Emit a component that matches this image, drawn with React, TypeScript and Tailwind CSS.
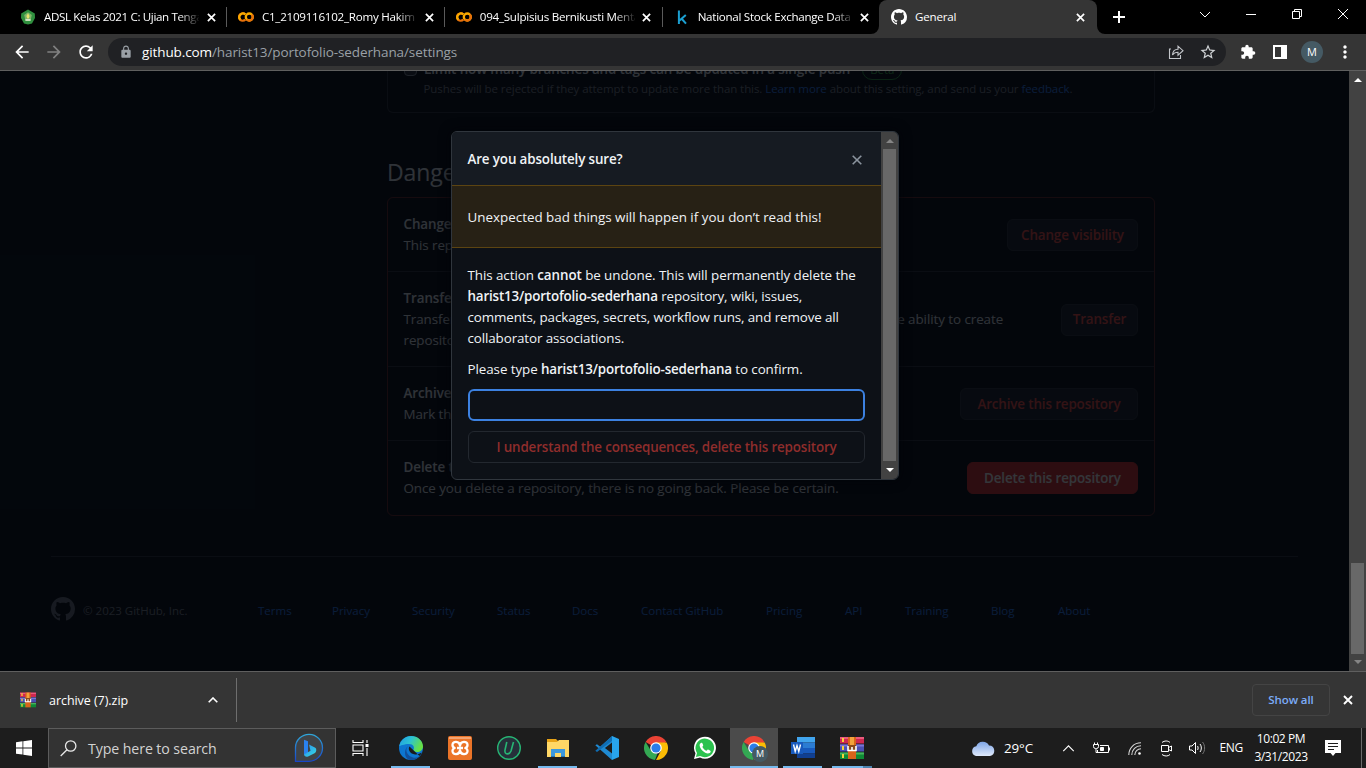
import React from "react";
import {
  MdArrowBack,
  MdArrowForward,
  MdRefresh,
  MdLock,
  MdStarBorder,
  MdExtension,
  MdMoreVert,
} from "react-icons/md";

const Octocat = ({ className }: { className: string }) => (
  <svg viewBox="0 0 16 16" className={className} fill="currentColor">
    <path d="M8 0C3.58 0 0 3.58 0 8c0 3.54 2.29 6.53 5.47 7.59.4.07.55-.17.55-.38 0-.19-.01-.82-.01-1.49-2.01.37-2.53-.49-2.69-.94-.09-.23-.48-.94-.82-1.13-.28-.15-.68-.52-.01-.53.63-.01 1.08.58 1.23.82.72 1.21 1.87.87 2.33.66.07-.52.28-.87.51-1.07-1.78-.2-3.64-.89-3.64-3.95 0-.87.31-1.59.82-2.15-.08-.2-.36-1.02.08-2.12 0 0 .67-.21 2.2.82.64-.18 1.32-.27 2-.27.68 0 1.36.09 2 .27 1.53-1.04 2.2-.82 2.2-.82.44 1.1.16 1.92.08 2.12.51.56.82 1.27.82 2.15 0 3.07-1.87 3.75-3.65 3.95.29.25.54.73.54 1.48 0 1.07-.01 1.93-.01 2.2 0 .21.15.46.55.38A8.013 8.013 0 0016 8c0-4.42-3.58-8-8-8z" />
  </svg>
);

const Cross = ({ className }: { className: string }) => (
  <svg viewBox="0 0 10 10" className={`shrink-0 ${className}`} stroke="white" strokeWidth="1.900">
    <path d="m1 1 8 8M9 1 1 9" />
  </svg>
);

const Crest = () => (
  <svg viewBox="0 0 16 16" className="size-4">
    <path d="M8 .5 14.8 4.5 15 9l-3 5.500L8 15.600 4 14.500 1 9l.2-4.500Z" fill="#2f8f3e" />
    <path d="M8 3.200 11.800 6 10.500 12h-5L4.200 6Z" fill="#7fb56a" />
    <path d="M8 4.200 9.600 7 8.700 9.500H7.300L6.400 7Z" fill="#e6e36a" />
    <path d="M5.500 10.200h5v1.500h-5Z" fill="#e9efe0" />
  </svg>
);

const Colab = () => (
  <svg viewBox="0 0 16 16" className="size-4" fill="none" strokeWidth="2.300">
    <path d="M7.300 5.300a3.700 3.700 0 1 0 0 5.400" stroke="#e8710a" />
    <path d="M2.300 10.700a3.700 3.700 0 0 1 5-5.400" stroke="#f9ab00" />
    <circle cx="11.300" cy="8" r="3.500" stroke="#f9ab00" />
    <path d="M13.800 5.600a3.500 3.500 0 0 1-5 4.900" stroke="#e8710a" />
  </svg>
);

const Kaggle = () => (
  <svg viewBox="0 0 16 16" className="size-4" fill="none" stroke="#1b9fd0" strokeWidth="2">
    <path d="M4.900 1.500V15M11.800 6 5.500 11.500M7.500 9.500l4.500 5.200" />
  </svg>
);

const Rar = ({ className }: { className: string }) => (
  <svg viewBox="0 0 24 24" className={className}>
    <path fill="#cf2850" d="M0 1h24v6.500H0z" />
    <path fill="#e95a7c" d="M0 1h24v2H0z" />
    <path fill="#4a4fb3" d="M0 8.500h24v7H0z" />
    <path fill="#7b74d6" d="M0 8.500h24v2H0z" />
    <path fill="#0f8a35" d="M0 16.500h24V23H0z" />
    <path fill="#46b45b" d="M0 16.500h24v2H0z" />
    <path fill="#f5d13a" d="M2 2h2v4H2zM2 10h2v4H2zM2 18h2v4H2z" />
    <path fill="#d9641b" d="M8 1h8v22H8z" />
    <path fill="#f2a33c" d="M10 1h4v8h-4z" />
    <path fill="#8a4a1c" d="M8 9h8v6H8z" />
    <path fill="none" stroke="#fff" strokeWidth="1.600" d="M8 10v4.500h8V10M12 11v3.500" />
  </svg>
);

const Bing = () => (
  <svg viewBox="0 0 30 30" className="size-[30px]" fill="none">
    <defs>
      <linearGradient id="bing-ring" x1="0" y1="1" x2="0" y2="0">
        <stop offset="0" stopColor="#1746c9" />
        <stop offset="1" stopColor="#2fa6d8" />
      </linearGradient>
      <linearGradient id="bing-b" x1="0" y1="0" x2="1" y2="1">
        <stop offset="0" stopColor="#2b8df0" />
        <stop offset="1" stopColor="#35dbe0" />
      </linearGradient>
    </defs>
    <path d="M1.500 28.300V14.500A13.500 13.500 0 1 1 15 28.300Z" fill="#3f4347" stroke="url(#bing-ring)" strokeWidth="1.300" />
    <path d="M10 6.800 14 8.200V20l-4 2Z" fill="#2a82ef" />
    <path d="m15 11.500 6.300 3.200c1.500 1 1.300 4-.3 5.200L14 23.500c-2 .8-4-.5-4-2l6.500-3.700Z" fill="url(#bing-b)" />
  </svg>
);

const Edge = () => (
  <svg viewBox="0 0 24 24" className="size-6">
    <defs>
      <linearGradient id="edge-top" x1="0" y1="0" x2="1" y2=".4">
        <stop offset="0" stopColor="#209be5" />
        <stop offset=".5" stopColor="#2cc3d2" />
        <stop offset="1" stopColor="#66e046" />
      </linearGradient>
    </defs>
    <circle cx="12" cy="12" r="12" fill="#0d76d0" />
    <path d="M.3 10C1.300 4.500 6 0 12 0c7 0 12 5 12 10.500 0 3.500-2.800 5.500-6 5.500-2.700 0-4-1.200-3.500-2.300 1.200-2.200.2-5.700-4.500-5.700C5 8 1 10 .3 10Z" fill="url(#edge-top)" />
    <path d="M9.500 10C6 12 6.500 19.500 14 21.500c3 .8 6-.5 7.500-2.500A12 12 0 0 1 10 23.800C4.500 21.500 5 12 9.500 10Z" fill="#124f9b" />
    <path d="M10.500 10.500C8.500 13 11 18 16 18.500c3 .3 5-1 6.500-2 .3 1-1.500 3-2 3.400" fill="#1a1a1a" />
  </svg>
);

const Xampp = () => (
  <svg viewBox="0 0 24 24" className="size-6">
    <rect width="24" height="24" rx="2" fill="#eb7428" />
    <rect x="1" y="1" width="22" height="2" fill="#f2a473" />
    <path
      d="M12 9.500C11.500 5 4.700 4.800 4.500 8.700c-.1 1.800 1 2.900 2.200 3.300-1.200.4-2.300 1.500-2.200 3.300.2 3.900 7 3.700 7.500-.8.5 4.500 7.300 4.700 7.500.8.1-1.800-1-2.900-2.200-3.300 1.200-.4 2.300-1.500 2.200-3.300C19.300 4.800 12.500 5 12 9.500ZM9 12h6"
      fill="none"
      stroke="#fff"
      strokeWidth="2.300"
      strokeLinejoin="round"
    />
  </svg>
);

const Uninstaller = () => (
  <svg viewBox="0 0 24 24" className="size-6" fill="none">
    <circle cx="12" cy="12" r="11.300" fill="#26303a" stroke="#27b574" strokeWidth="1.400" />
    <path d="M9.800 6 8 14c-.8 5 4.500 5 6 1L16.500 6" stroke="#27b574" strokeWidth="1.600" />
  </svg>
);

const Explorer = () => (
  <svg viewBox="0 0 24 24" className="size-6">
    <path fill="#e8a317" d="M1 3h9l2 2v3H1z" />
    <path fill="#ffd766" d="M1 6h10l2-2h10v17H1z" />
    <path fill="#3c98dd" d="M5 13h14v8h-4v-4H9v4H5z" />
    <path fill="#2171b5" d="M5 20h4v1H5zM15 20h4v1h-4z" />
  </svg>
);

const Code = () => (
  <svg viewBox="0 0 24 24" className="size-6">
    <path d="M17 0 5.300 10.800 2 8.200.3 9.300 17 24l1-6.500V6.500Z" fill="#1f8ad2" />
    <path d="M.3 14.800 2 16 17.500 4.500V0L.3 14.800Z" fill="#0f6db3" />
    <path d="M17 0 24 3v18l-7 3V6.500L9.800 12l7.200 5.500Z" fill="#28a5ee" />
    <path d="M17 6.500v11L9.800 12Z" fill="#1c1c1c" />
  </svg>
);

const Chrome = () => (
  <svg viewBox="0 0 24 24" className="size-6">
    <path d="M12 12 1.600 6A12 12 0 0 1 22.400 6Z" fill="#ea4335" />
    <path d="M12 6.500h10.700A12 12 0 0 1 12 24l4.800-9Z" fill="#fbbc05" />
    <path d="M1.600 6 6.800 14.500 12 18l1.500-.5L11 24A12 12 0 0 1 1.600 6Z" fill="#34a853" />
    <circle cx="12" cy="12" r="5.800" fill="#fff" />
    <circle cx="12" cy="12" r="4.600" fill="#2b7de9" />
  </svg>
);

const WhatsApp = () => (
  <svg viewBox="0 0 24 24" className="size-6">
    <path d="M1 23 2.500 17.300A11 11 0 1 1 7 21.500Z" fill="#fff" />
    <path d="M2.900 21.100 4 17A9.300 9.300 0 1 1 7.200 20Z" fill="#2bc24e" />
    <path d="M8.500 6.800c-.7 0-1.900 1-1.900 2.500 0 3.500 5 8.200 8.300 8.200 1.500 0 2.800-1 2.800-2.300 0-.6-2.400-1.900-2.900-1.700-.5.300-.9 1.300-1.400 1.200-1.500-.4-3.500-2.300-4-3.700-.1-.5.800-1 .8-1.500 0-.5-.8-2.500-1.200-2.700Z" fill="#fff" />
  </svg>
);

const Word = () => (
  <svg viewBox="0 0 24 24" className="size-6">
    <path fill="#41a5ee" d="M6 1h18v5.500H6z" />
    <path fill="#2b7cd3" d="M6 6.500h18V12H6z" />
    <path fill="#185abd" d="M6 12h18v5.500H6z" />
    <path fill="#103f91" d="M6 17.500h18V22H6z" />
    <path fill="#185abd" d="M0 6h12v12H0z" />
    <path fill="none" stroke="#fff" strokeWidth="1.400" d="M2.500 8.500 4.200 15.300 6 9.500l1.800 5.800L9.500 8.500" />
  </svg>
);

const ArrowUp = ({ className }: { className: string }) => (
  <svg viewBox="0 0 8 4" className={className} fill="currentColor">
    <path d="M0 4 4 0l4 4Z" />
  </svg>
);

const tabs = [
  { icon: <Crest />, title: "ADSL Kelas 2021 C: Ujian Tengah", spacing: "tracking-[-0.36px]" },
  { icon: <Colab />, title: "C1_2109116102_Romy Hakim", spacing: "tracking-[-0.25px]" },
  { icon: <Colab />, title: "094_Sulpisius Bernikusti Menta", spacing: "tracking-[-0.25px]" },
  { icon: <Kaggle />, title: "National Stock Exchange Data", spacing: "tracking-[-0.28px]" },
];

const TabStrip = () => (
  <div className="flex h-[34px] bg-black pl-[9px] text-[11.6px] text-white">
    {tabs.map((t, i) => (
      <div key={i} className="flex w-[217.9px] shrink-0 items-center pl-[11px]">
        {t.icon}
        <div
          className={`ml-2 w-[155px] overflow-hidden whitespace-nowrap [mask-image:linear-gradient(to_right,black_87%,transparent_101%)] ${t.spacing}`}
        >
          {t.title}
        </div>
        <Cross className={`size-[9px] ${i < 2 ? "ml-[8px]" : "ml-[7px]"}`} />
        <div className={`ml-auto h-5 w-px ${i === 3 ? "bg-transparent" : "bg-[#5a5a5a]"}`} />
      </div>
    ))}
    <div className="relative -ml-[1.6px] flex w-[218px] items-center rounded-t-lg bg-[#353535] pl-[12px]">
      <svg viewBox="0 0 8 8" className="absolute -left-2 bottom-0 size-2" fill="#353535">
        <path d="M8 0v8H0a8 8 0 0 0 8-8Z" />
      </svg>
      <svg viewBox="0 0 8 8" className="absolute -right-2 bottom-0 size-2" fill="#353535">
        <path d="M0 0v8h8a8 8 0 0 1-8-8Z" />
      </svg>
      <Octocat className="size-4" />
      <span className="ml-2 tracking-[-0.2px]">General</span>
      <Cross className="mr-[12px] ml-auto size-[9px]" />
    </div>
    <svg viewBox="0 0 12 12" className="mt-[11px] ml-[16px] size-3" stroke="white" strokeWidth="2">
      <path d="M6 0v12M0 6h12" />
    </svg>
    <div className="mt-[8px] ml-auto flex items-center gap-[34px] self-start pr-[17px]">
      <svg viewBox="0 0 12 12" className="size-3" fill="none" stroke="white" strokeWidth="1">
        <path d="m1 4 5 5 5-5" />
      </svg>
      <svg viewBox="0 0 12 12" className="size-3" stroke="white">
        <path d="M1 6.500h10" />
      </svg>
      <svg viewBox="0 0 12 12" className="size-3" fill="none" stroke="white">
        <path d="M1.500 3.500h7v7h-7zM3.500 3.500v-2h7v7h-2" />
      </svg>
      <svg viewBox="0 0 12 12" className="size-3" fill="none" stroke="white">
        <path d="m1 1 10 10M11 1 1 11" />
      </svg>
    </div>
  </div>
);

const Toolbar = () => (
  <div className="flex h-[37px] items-center border-b border-[#5f5f5f] bg-[#353535] text-white">
    <MdArrowBack className="ml-[12px] size-5" />
    <MdArrowForward className="ml-3 size-5 text-[#818181]" />
    <MdRefresh className="ml-3 size-5" />
    <div className="ml-3 flex h-7 w-[1118px] items-center rounded-full bg-[#202124] pr-[9px] pl-[11px] text-[13.5px] tracking-[-0.1px] text-[#9aa0a6]">
      <MdLock className="size-3.5" />
      <span className="ml-[9px] whitespace-nowrap">
        <span className="text-white">github.com</span>/harist13/portofolio-sederhana/settings
      </span>
      <svg viewBox="0 0 16 16" className="ml-auto size-4" fill="none" stroke="#c3c6ca" strokeWidth="1.100">
        <path d="M3 5H1.500v9.500h11V11M4.500 11C4.800 7 7 5.300 10 5.300V2.200L15 6.700l-5 4.500V8.300c-2.500 0-4.200.7-5.500 2.700Z" />
      </svg>
      <MdStarBorder className="ml-[15px] size-[18px] text-[#d0d3d6]" />
    </div>
    <MdExtension className="ml-[14px] size-4" />
    <svg viewBox="0 0 14 14" className="ml-[17px] size-[14px]" fill="white">
      <path d="M0 0h14v14H0zM2 2v10h6V2z" fillRule="evenodd" />
    </svg>
    <div className="ml-[14px] flex size-[22px] items-center justify-center rounded-full bg-[#455a64] text-[11px]">M</div>
    <MdMoreVert className="ml-[11.5px] size-5" />
  </div>
);

const rows = [
  {
    title: "Change repository visibility",
    lines: ["This repository is currently public."],
    button: "Change visibility",
    size: "h-[74px] pt-[1px]",
    btn: "w-[131px] text-[#f85149] bg-[#21262d] border-[#30363d]",
  },
  {
    title: "Transfer ownership",
    lines: [
      "Transfer this repository to another user or to an organization where you have the ability to create",
      "repositories.",
    ],
    button: "Transfer",
    size: "h-[95px] pt-[1px]",
    btn: "w-[77px] text-[#f85149] bg-[#21262d] border-[#30363d]",
  },
  {
    title: "Archive this repository",
    lines: ["Mark this repository as archived and read-only."],
    button: "Archive this repository",
    size: "h-[74px] pt-[1px]",
    btn: "w-[178px] text-[#f85149] bg-[#21262d] border-[#30363d]",
  },
  {
    title: "Delete this repository",
    lines: ["Once you delete a repository, there is no going back. Please be certain."],
    button: "Delete this repository",
    size: "h-[74px]",
    btn: "w-[171px] text-white bg-[#da3633] border-[#da3633]",
  },
];

const footerLinks = [
  ["Terms", "w-[74px]"],
  ["Privacy", "w-[80px]"],
  ["Security", "w-[85px]"],
  ["Status", "w-[75px]"],
  ["Docs", "w-[69px]"],
  ["Contact GitHub", "w-[125px]"],
  ["Pricing", "w-[79px]"],
  ["API", "w-[60px]"],
  ["Training", "w-[86px]"],
  ["Blog", "w-[67px]"],
  ["About", "w-[60px]"],
];

const Settings = () => (
  <div className="text-[13.4px] leading-[21px] tracking-[-0.07px] text-[#e6edf3]">
    <div className="ml-[387px] w-[768px]">
      <div className="flow-root h-[42px] rounded-b-md border border-t-0 border-[#30363d] pl-4">
        <div className="-mt-[12px] flex items-center">
          <div className="h-[13px] w-[13px] rounded-sm border border-[#8b949e] bg-[#30363d]" />
          <span className="ml-[7px] font-semibold tracking-[-0.1px] whitespace-nowrap">
            Limit how many branches and tags can be updated in a single push
          </span>
          <span className="ml-3 rounded-full border border-[#2ea043] px-[7px] text-[11.5px] leading-[18px] text-[#3fb950]">
            Beta
          </span>
        </div>
        <div className="ml-[19.5px] text-[11.5px] leading-[18px] tracking-[-0.08px] whitespace-nowrap text-[#7d8590]">
          Pushes will be rejected if they attempt to update more than this.{" "}
          <span className="text-[#2f81f7]">Learn more</span> about this setting, and send us your{" "}
          <span className="text-[#2f81f7]">feedback</span>.
        </div>
      </div>
      <h2 className="mt-[41px] h-[43px] text-[23px] leading-9">Danger Zone</h2>
      <div className="rounded-md border border-[#f85149]/40">
        {rows.map((r, i) => (
          <div
            key={r.title}
            className={`flex items-center justify-between pr-4 pl-[15.5px] ${r.size} ${i < 3 ? "border-b border-[#30363d]" : ""}`}
          >
            <div className="whitespace-nowrap">
              <div className="font-semibold">{r.title}</div>
              {r.lines.map((l) => (
                <div key={l}>{l}</div>
              ))}
            </div>
            <div
              className={`flex h-8 shrink-0 items-center justify-center rounded-md border font-semibold tracking-[-0.13px] whitespace-nowrap ${r.btn}`}
            >
              {r.button}
            </div>
          </div>
        ))}
      </div>
    </div>
    <div className="mx-[51px] mt-10 flex items-center border-t border-[#30363d] pt-10 text-[11.5px] tracking-normal text-[#7d8590]">
      <Octocat className="size-6 text-[#6e7681]" />
      <span className="ml-2 w-[175px] pt-0.5">© 2023 GitHub, Inc.</span>
      {footerLinks.map(([label, width]) => (
        <span key={label} className={`pt-0.5 whitespace-nowrap text-[#2f81f7] ${width}`}>
          {label}
        </span>
      ))}
    </div>
  </div>
);

const Modal = () => (
  <div className="absolute top-[60px] left-[451px] flex h-[349px] w-[448px] overflow-hidden rounded-md border border-[#30363d] bg-[#0d1117] text-[13.4px] leading-[21px] text-[#f0f3f6] shadow-[0_0_12px_#010409]">
    <div className="flex min-w-0 flex-1 flex-col">
      <div className="flex h-[53px] items-center justify-between bg-[#161b22] px-[15.5px] pt-[2px] font-semibold tracking-[-0.13px]">
        Are you absolutely sure?
        <svg viewBox="0 0 10 10" className="mr-[4px] size-[10px]" stroke="#8b949e" strokeWidth="1.600">
          <path d="m.7.7 8.600 8.600M9.300.7.7 9.300" />
        </svg>
      </div>
      <div className="flex h-[63px] items-center border-y border-[#5c4411] bg-[#272115] px-[15.5px] pt-[2px]">
        Unexpected bad things will happen if you don’t read this!
      </div>
      <div className="flex flex-col px-4 pt-[17px] tracking-[-0.11px] whitespace-nowrap">
        <p className="-ml-[0.5px]">
          <span className="tracking-[-0.07px]">
            This action <b className="font-semibold">cannot</b> be undone. This will permanently delete the
          </span>
          <br />
          <b className="font-semibold tracking-[-0.18px]">harist13/portofolio-sederhana</b> repository, wiki, issues,
          <br />
          comments, packages, secrets, workflow runs, and remove all
          <br />
          collaborator associations.
        </p>
        <p className="mt-[10px] -ml-[0.5px] tracking-[-0.08px]">
          Please type <b className="font-semibold tracking-[-0.16px]">harist13/portofolio-sederhana</b> to confirm.
        </p>
        <div className="mt-[9px] h-8 rounded-md border-2 border-[#3c81e0] bg-[#0d1117]" />
        <div className="mt-[10px] flex h-8 items-center justify-center rounded-md border border-[#23282f] bg-[#0d1117] font-semibold tracking-[-0.15px] text-[#8f2d2c]">
          I understand the consequences, delete this repository
        </div>
      </div>
    </div>
    <div className="flex w-[17px] flex-col items-center bg-[#424242]">
      <div className="flex h-[17px] items-center text-[#858585]">
        <ArrowUp className="h-1 w-2" />
      </div>
      <div className="w-[13px] flex-1 bg-[#686868]" />
      <div className="flex h-[18px] items-center text-white">
        <ArrowUp className="h-1 w-2 rotate-180" />
      </div>
    </div>
  </div>
);

const DownloadBar = () => (
  <div className="flex h-[57px] items-center border-t border-[#5f5f5f] bg-[#353535] text-white">
    <Rar className="ml-5 size-4" />
    <span className="ml-[13px] w-[159px] pt-[2px] text-[12.5px] tracking-[-0.05px]">archive (7).zip</span>
    <svg viewBox="0 0 10 6" className="h-[6px] w-[10px]" fill="none" stroke="white" strokeWidth="1.600">
      <path d="m.7 5.300 4.300-4.300 4.300 4.300" />
    </svg>
    <div className="ml-[18px] h-11 w-px bg-[#6e6e6e]" />
    <div className="ml-auto flex h-8 w-[78px] items-center justify-center rounded border border-[#444] text-[11.5px] font-semibold tracking-[-0.1px] text-[#7cacf8]">
      Show all
    </div>
    <Cross className="mr-[13px] ml-[13px] size-[10px]" />
  </div>
);

const apps = [
  { icon: <Edge />, open: true },
  { icon: <Xampp />, open: false },
  { icon: <Uninstaller />, open: false },
  { icon: <Explorer />, open: true },
  { icon: <Code />, open: false },
  { icon: <Chrome />, open: false },
  { icon: <WhatsApp />, open: false },
];

const Underline = ({ className }: { className: string }) => (
  <div className={`absolute bottom-0 h-0.5 bg-[#76b9ed] ${className}`} />
);

const Taskbar = () => (
  <div className="flex h-10 items-center bg-[#1d1d1d] text-[12px] text-white">
    <div className="flex w-12 justify-center">
      <svg viewBox="0 0 16 16" className="size-4" fill="white">
        <path d="M0 2.200 6.500 1.300v6.200H0zM7.300 1.200 16 0v7.500H7.300zM0 8.400h6.500v6.200L0 13.700zM7.300 8.400H16V16l-8.700-1.200z" />
      </svg>
    </div>
    <div className="flex h-10 w-[288px] items-center border border-[#5c5c5c] bg-[#333] pr-[11px] pl-[11px]">
      <svg viewBox="0 0 17 17" className="size-[17px]" fill="none" stroke="#e8e8e8" strokeWidth="1.300">
        <circle cx="10.700" cy="6" r="5.200" />
        <path d="M7 9.700.7 16" />
      </svg>
      <span className="ml-[11px] pt-px text-[14.2px] tracking-[-0.1px] text-[#d2d2d2]">Type here to search</span>
      <div className="ml-auto">
        <Bing />
      </div>
    </div>
    <div className="flex w-[50px] justify-center pr-[2px]">
      <svg viewBox="0 0 17 16" className="h-4 w-[17px]" fill="none" stroke="white" strokeWidth="1.100">
        <path d="M1 0v2.500h10V0M1 16v-2.500h10V16M1 5h10v6H1zM15 0v3M15 8v8" />
        <path d="M13.500 4h3v3h-3z" fill="white" stroke="none" />
      </svg>
    </div>
    {apps.map((a, i) => (
      <div key={i} className="relative flex h-10 w-[49px] items-center justify-center">
        {a.icon}
        {a.open && <Underline className="inset-x-[5px]" />}
      </div>
    ))}
    <div className="relative ml-[1px] flex h-10 w-12 items-center justify-center bg-[#4b4b4b]">
      <Chrome />
      <div className="absolute top-[18px] left-[22px] flex size-4 items-center justify-center rounded-full bg-[#455a64] text-[9px]">
        M
      </div>
      <Underline className="inset-x-0" />
    </div>
    <div className="relative flex h-10 w-[49px] items-center justify-center">
      <Word />
      <Underline className="inset-x-[5px]" />
    </div>
    <div className="relative flex h-10 w-[49px] items-center justify-center">
      <Rar className="size-6" />
      <Underline className="left-[5px] w-[31px]" />
      <div className="absolute bottom-0 left-[36px] h-0.5 w-[9px] bg-[#4d83ae]" />
    </div>
    <div className="ml-auto flex h-10 items-center">
      <svg viewBox="0 0 24 16" className="h-4 w-6">
        <defs>
          <linearGradient id="cloud" x1="0" y1="0" x2="0" y2="1">
            <stop offset="0" stopColor="#7fa6e6" />
            <stop offset="1" stopColor="#dfeafc" />
          </linearGradient>
        </defs>
        <path d="M5 16a5 5 0 0 1 .3-9.800A7 7 0 0 1 18 5.500 5.300 5.300 0 0 1 19 16Z" fill="url(#cloud)" />
      </svg>
      <span className="ml-[9px] w-[58px] text-[13.4px] tracking-[-0.1px]">29°C</span>
      <svg viewBox="0 0 14 8" className="h-[7px] w-[13px]" fill="none" stroke="white" strokeWidth="1.300">
        <path d="m1 7 6-6 6 6" />
      </svg>
      <svg viewBox="0 0 17 12" className="ml-[18px] h-3 w-[17px]" fill="none" stroke="white">
        <path d="M7 3.500h8.500v7H4.500V8M16.500 5.500v3M1.500.5v2M4.500.5v2M.5 2.500h5v2a2 2 0 0 1-2 2h-1a2 2 0 0 1-2-2zM3 6.500v4h2" />
        <path d="M7.500 5.500h3v3h-3z" fill="white" />
      </svg>
      <svg viewBox="0 0 13 13" className="ml-[18px] size-[13px]" fill="none" stroke="#d8d8d8" strokeWidth="1.100">
        <path d="M.8 13C.8 6 6 .8 13 .8M3.800 13c0-5.200 4-9.200 9.200-9.200M6.800 13c0-3.500 2.700-6.200 6.200-6.200" />
        <circle cx="11.500" cy="11.500" r="1.300" fill="white" stroke="none" />
      </svg>
      <svg viewBox="0 0 13 17" className="ml-[19px] h-[17px] w-[13px]" fill="none" stroke="white">
        <path d="M1.500 5.500h7v6h-7zM8.500 7.500l3-1.500v5l-3-1.500M2 2.500c2.500-2 6-2 8 0M2 14.500c2.500 2 6 2 8 0" />
      </svg>
      <svg viewBox="0 0 17 14" className="ml-[16px] h-[14px] w-[17px]" fill="none" stroke="white">
        <path d="M.5 5v4h2.500l3.500 3.500v-11L3 5ZM8.500 5c.8 1 .8 3 0 4M11 3c1.800 2 1.800 6 0 8" />
        <path d="M13.500 1c2.800 3 2.800 9 0 12" stroke="#777" />
      </svg>
      <span className="ml-[13.5px] w-[24px] tracking-[-0.4px]">ENG</span>
      <div className="ml-[8.5px] w-[58px] text-center text-[12px] leading-[18px] tracking-[-0.4px] whitespace-nowrap">
        10:02 PM
        <br />
        3/31/2023
      </div>
      <svg viewBox="0 0 16 16" className="ml-[15px] size-4" fill="white">
        <path d="M0 0h16v13h-5.500L8 16l-2.500-3H0Z" />
        <path d="M3 3.500h10M3 6.500h10M3 9.500h6" stroke="#1d1d1d" />
      </svg>
      <div className="mr-[4px] ml-5 h-10 w-px bg-[#6a6a6a]" />
    </div>
  </div>
);

export default function App() {
  return (
    <div className="flex h-[768px] w-[1366px] flex-col overflow-hidden bg-black font-['Open_Sans','Noto_Sans',sans-serif]">
      <TabStrip />
      <Toolbar />
      <div className="flex h-[600px]">
        <div className="relative w-[1349px] overflow-hidden bg-[#0d1117]">
          <Settings />
          <div className="absolute inset-0 bg-[#010409]/80" />
          <Modal />
        </div>
        <div className="flex w-[17px] flex-col items-center bg-[#424242]">
          <ArrowUp className="mt-[7px] h-1 w-2 text-white" />
          <div className="mt-[481px] h-[91px] w-[13px] bg-[#686868]" />
          <ArrowUp className="mt-[6px] h-1 w-2 rotate-180 text-[#858585]" />
        </div>
      </div>
      <DownloadBar />
      <Taskbar />
    </div>
  );
}
